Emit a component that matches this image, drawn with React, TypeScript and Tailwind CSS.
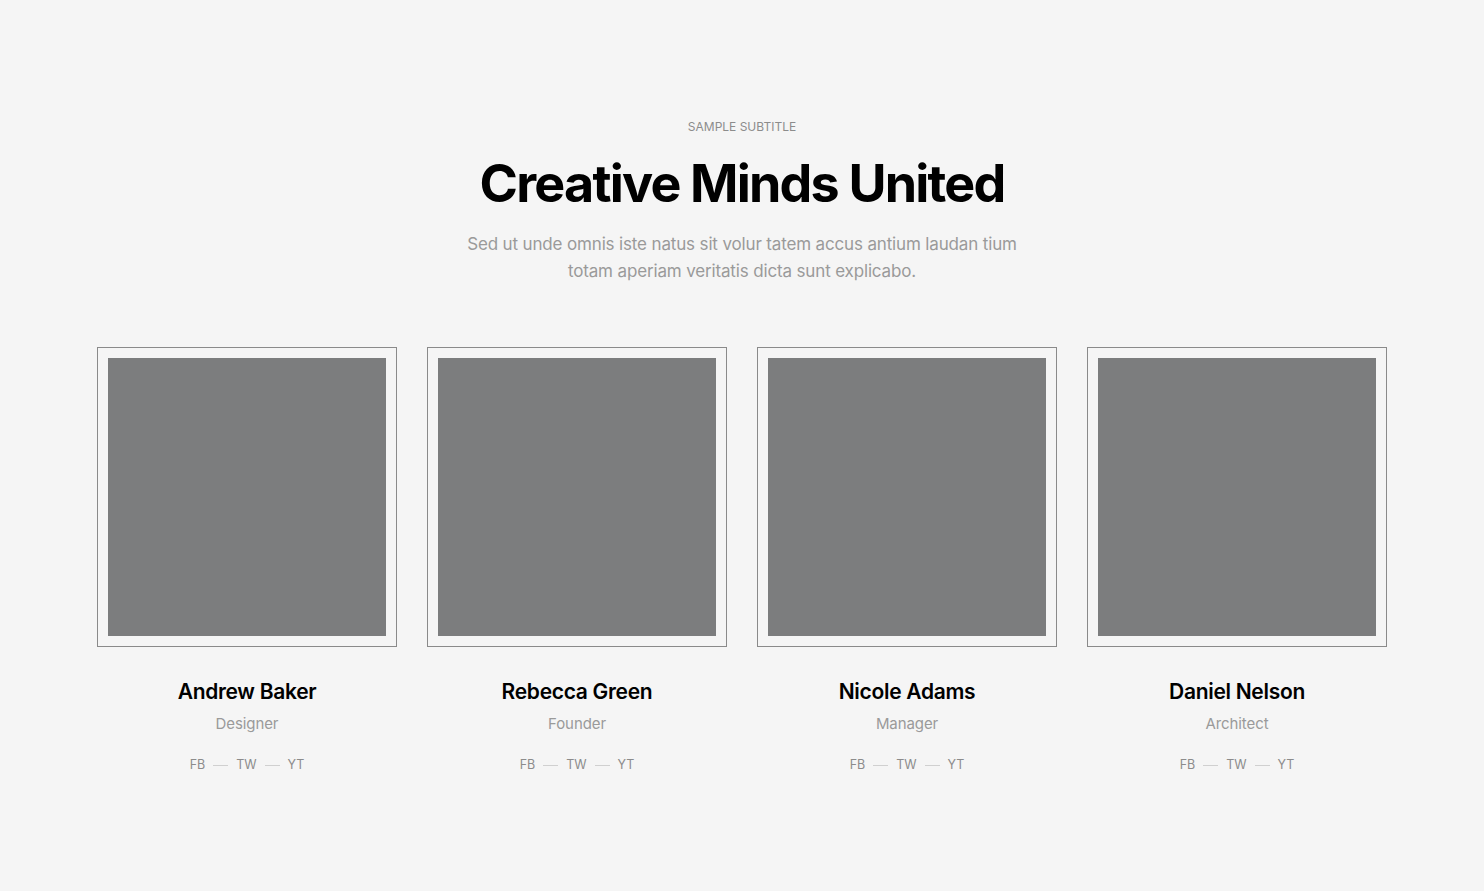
import React from "react";

const team = [
  { name: "Andrew Baker", role: "Designer" },
  { name: "Rebecca Green", role: "Founder" },
  { name: "Nicole Adams", role: "Manager" },
  { name: "Daniel Nelson", role: "Architect" },
];

export default function App() {
  return (
    <div
      className="min-h-[891px] w-full bg-[#f5f5f5] flex flex-col items-center"
      style={{ fontFamily: "Inter, 'Noto Sans', sans-serif" }}
    >
      <div className="pt-[120px] flex flex-col items-center text-center">
        <div className="text-[12px] leading-[14px] uppercase text-[#8c8c8c] tracking-[0px]">
          Sample Subtitle
        </div>
        <h1 className="mt-[19px] text-[52px] leading-[62px] font-bold text-black tracking-[-1.8px]">
          Creative Minds United
        </h1>
        <p className="mt-[16px] w-[580px] text-[17px] leading-[27px] text-[#9a9a9a] tracking-[-0.15px]">
          Sed ut unde omnis iste natus sit volur tatem accus antium laudan tium totam aperiam veritatis dicta sunt explicabo.
        </p>
      </div>
      <div className="mt-[62px] grid grid-cols-4 gap-[30px]">
        {team.map((m) => (
          <div key={m.name} className="w-[300px] flex flex-col items-center">
            <div className="w-[300px] h-[300px] border border-[#8a8a8a] p-[10px]">
              <div className="w-full h-full bg-[#7c7d7e]" />
            </div>
            <div className="mt-[31px] text-[21px] leading-[28px] font-semibold text-black tracking-[-0.3px]">
              {m.name}
            </div>
            <div className="mt-[8px] text-[15px] leading-[20px] text-[#9a9a9a] tracking-[-0.1px]">
              {m.role}
            </div>
            <div className="mt-[23px] flex items-center gap-[8px] text-[12.5px] leading-[16px] text-[#8c8c8c]">
              <span>FB</span>
              <span className="w-[15px] h-px bg-[#d0d0d0]" />
              <span>TW</span>
              <span className="w-[15px] h-px bg-[#d0d0d0]" />
              <span>YT</span>
            </div>
          </div>
        ))}
      </div>
    </div>
  );
}
